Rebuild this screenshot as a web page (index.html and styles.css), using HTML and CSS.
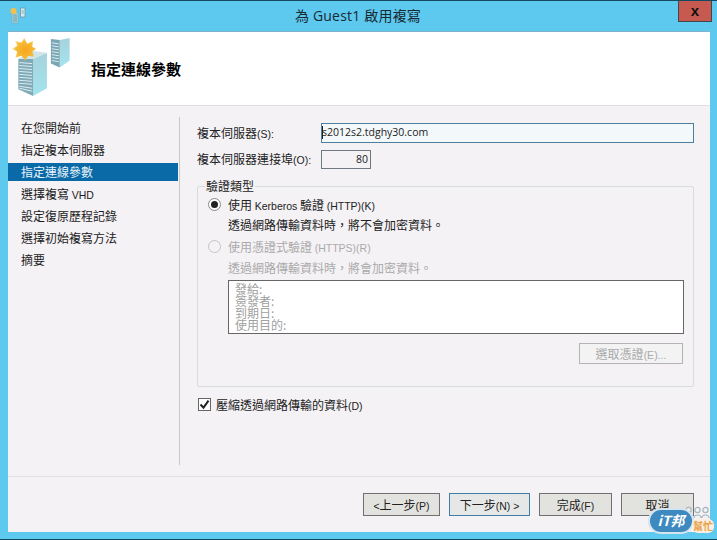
FILE: index.html
```html
<!DOCTYPE html>
<html lang="zh-Hant">
<head>
<meta charset="utf-8">
<title>為 Guest1 啟用複寫</title>
<link rel="stylesheet" href="styles.css">
</head>
<body>
<div class="window">
  <div class="titlebar">
    <svg class="app-icon" width="18" height="22" viewBox="9 5 18 22">
      <polygon points="12,13 18,12 18,23 12,23" fill="#a8d6e0" stroke="#7aa5b0" stroke-width=".6"/>
      <path d="M13 15h4M13 17h4M13 19h4M13 21h4" stroke="#5f8d99" stroke-width=".8"/>
      <rect x="20.500" y="8" width="4.500" height="9" fill="#d4e9ee" stroke="#6f9aa5" stroke-width=".8"/>
      <path d="M21.500 11h2.500M21.500 13h2.500" stroke="#6f9aa5" stroke-width=".7"/>
      <circle cx="13.500" cy="11" r="3" fill="#f3c04a"/>
    </svg>
    <div class="title">為 Guest1 啟用複寫</div>
    <div class="close"><span>x</span></div>
  </div>
  <div class="client">
    <header class="header">
      <svg class="wizard-icon" width="70" height="74" viewBox="8 31 70 74">
        <defs>
          <linearGradient id="sideA" x1="0" y1="0" x2="0" y2="1">
            <stop offset="0" stop-color="#a5d3dc"/><stop offset="1" stop-color="#a4e4ee"/>
          </linearGradient>
          <radialGradient id="sun" cx=".55" cy=".55" r=".55">
            <stop offset="0" stop-color="#f6a51c"/><stop offset=".7" stop-color="#f6bb38"/><stop offset="1" stop-color="#f8d679"/>
          </radialGradient>
        </defs>
        <polygon points="60,39 70,37 70,60 60,67" fill="url(#sideA)"/>
        <polygon points="51,38 60,39 60,67 51,63" fill="#7aa6b3"/>
        <path d="M52 42l7 1M52 45l7 1M52 48l7 1M52 51l7 1M52 54l7 1M52 57l7 1M52 60l7 1" stroke="#d9ecf0" stroke-width="1"/>
        <polygon points="33,58 47,52 47,88 33,96" fill="url(#sideA)"/>
        <polygon points="18,58 33,58 33,96 18,89" fill="#7fa9b6"/>
        <polygon points="18,58 32,50 47,52 33,58" fill="#cfe5ea"/>
        <path d="M19 62l13 1M19 65l13 1M19 68l13 1M19 71l13 1M19 74l13 1M19 77l13 1M19 80l13 1M19 83l13 1M19 86l13 2M19 88l13 3" stroke="#deeff3" stroke-width="1"/>
        <polygon points="24,37 27,43 33,40 32,46 36,48 32,51 34,56 28,55 25,60 21,55 15,57 17,51 12,48 17,45 15,40 21,42" fill="url(#sun)"/>
      </svg>
      <h1 class="heading">指定連線參數</h1>
    </header>
    <div class="main">
      <nav class="steps">
        <div class="step">在您開始前</div>
        <div class="step">指定複本伺服器</div>
        <div class="step step-active">指定連線參數</div>
        <div class="step">選擇複寫 <span class="en">VHD</span></div>
        <div class="step">設定復原歷程記錄</div>
        <div class="step">選擇初始複寫方法</div>
        <div class="step">摘要</div>
      </nav>
      <section class="form">
        <div class="field-server">
          <label class="field-label">複本伺服器<span class="en">(S):</span></label>
          <div class="input input-server"><i class="caret"></i>s2012s2.tdghy30.com</div>
        </div>
        <div class="field-port">
          <label class="field-label">複本伺服器連接埠<span class="en">(O):</span></label>
          <div class="input input-port">80</div>
        </div>
        <fieldset class="auth">
          <legend class="auth-legend">驗證類型</legend>
          <div class="option">
            <span class="radio radio-on"></span>
            <span>使用 <span class="en">Kerberos</span> 驗證 <span class="en">(HTTP)(K)</span></span>
          </div>
          <div class="option-note">透過網路傳輸資料時，將不會加密資料。</div>
          <div class="option option-off">
            <span class="radio radio-off"></span>
            <span>使用憑證式驗證 <span class="en">(HTTPS)(R)</span></span>
          </div>
          <div class="option-note note-off">透過網路傳輸資料時，將會加密資料。</div>
          <div class="cert">
            <div>發給:</div>
            <div>簽發者:</div>
            <div>到期日:</div>
            <div>使用目的:</div>
          </div>
          <div class="cert-actions"><div class="btn-cert">選取憑證<span class="en">(E)...</span></div></div>
        </fieldset>
        <div class="compress">
          <span class="checkbox"><svg width="11" height="11" viewBox="0 0 11 11"><path d="M1.5 5.500l3 3.200 5-7" fill="none" stroke="#222" stroke-width="2"/></svg></span>
          <span>壓縮透過網路傳輸的資料<span class="en">(D)</span></span>
        </div>
      </section>
    </div>
    <footer class="footer">
      <div class="btn btn-back"><span class="en">&lt;</span>上一步<span class="en">(P)</span></div>
      <div class="btn btn-next">下一步<span class="en">(N) &gt;</span></div>
      <div class="btn btn-finish">完成<span class="en">(F)</span></div>
      <div class="btn btn-cancel">取消</div>
    </footer>
  </div>
  <div class="badge">
    <svg class="badge-people" width="26" height="14" viewBox="0 0 26 14">
      <g fill="#eef2f5" stroke="#a9b4bd" stroke-width="1.200">
        <path d="M1 13c0-4 7-4 7 0M10 13c0-4 7-4 7 0M18 13c0-4 7-4 7 0"/>
        <circle cx="4.500" cy="5" r="2.600"/><circle cx="13.500" cy="5" r="2.600"/><circle cx="21.500" cy="5" r="2.600"/>
      </g>
    </svg>
    <div class="badge-pill">iT邦</div>
    <div class="badge-help">幫忙</div>
  </div>
</div>
</body>
</html>
```
FILE: styles.css
```css
* { box-sizing: border-box; }
html, body { margin: 0; padding: 0; }
body {
  width: 717px;
  height: 540px;
  overflow: hidden;
  font-family: "Noto Sans CJK TC", "Open Sans", sans-serif;
  font-size: 12px;
  color: #111;
}
.en { font-family: "Liberation Sans", sans-serif; font-size: 10.5px; }
.window {
  position: relative;
  width: 717px;
  height: 540px;
  background: #5dc9ef;
  border-top: 1px solid #124a62;
  border-bottom: 1px solid #124a62;
  display: flex;
  flex-direction: column;
  padding: 0 7px 7px 8px;
}
.titlebar {
  height: 30px;
  flex: none;
  position: relative;
  display: flex;
  align-items: center;
  justify-content: center;
}
.app-icon { position: absolute; left: 1px; top: 4px; }
.title {
  font-family: "Open Sans", "Noto Sans CJK TC", sans-serif;
  font-size: 14px;
  letter-spacing: .2px;
  line-height: 20px;
  margin: -1px 2px 0 0;
  color: #1a2a33;
}
.close {
  position: absolute;
  right: -2px;
  top: 0;
  width: 34px;
  height: 21px;
  background: #c75a50;
  border: 1px solid #40484c;
  border-top: 0;
  display: flex;
  align-items: center;
  justify-content: center;
}
.close span { font: bold 15px/18px "Liberation Sans", sans-serif; color: #111; }
.client {
  flex: 1;
  min-height: 0;
  display: flex;
  flex-direction: column;
  background: #f5f2f6;
  border-top: 1px solid #7fb4c8;
}
.header {
  height: 74px;
  flex: none;
  background: #fff;
  border-bottom: 1px solid #e2dde0;
  display: flex;
  align-items: flex-start;
}
.wizard-icon { flex: none; height: 73px; }
.heading {
  margin: 27px 0 0 13px;
  font-size: 15px;
  line-height: 20px;
  font-weight: 700;
  color: #000;
}
.main {
  flex: none;
  height: 371px;
  display: flex;
  padding-top: 11px;
  border-bottom: 1px solid #e2dfe3;
}
.steps {
  width: 172px;
  height: 348px;
  flex: none;
  border-right: 1px solid #c9c7cb;
  padding-top: 1px;
}
.step {
  width: 170px;
  height: 22px;
  line-height: 20px;
  padding-left: 13px;
  color: #1b1b1b;
}
.step-active {
  height: 18px;
  line-height: 18px;
  margin: 1px 0 3px;
  background: #0a6aa8;
  color: #e9f4fa;
}
.form {
  width: 515px;
  flex: none;
  padding: 6px 0 0 17px;
}
.field-server, .field-port { display: flex; align-items: center; }
.field-server { height: 20px; }
.field-port { height: 19px; margin-top: 7px; }
.field-label { width: 124px; flex: none; white-space: nowrap; color: #222; line-height: 14px; }
.input {
  border: 1px solid #7c8c96;
  font-family: "Open Sans", sans-serif;
  font-size: 10.5px;
  color: #222;
}
.input-server {
  width: 373px;
  height: 20px;
  line-height: 17px;
  background: #f3f8fa;
  border-color: #4f7f9e;
  padding-left: 0;
  position: relative;
}
.caret { position: absolute; left: 0; top: 2px; width: 1px; height: 13px; background: #222; }
.input-port {
  width: 50px;
  height: 19px;
  line-height: 16px;
  text-align: right;
  padding-right: 2px;
  background: #f5f2f6;
  border-color: #6f7a80;
}
.auth {
  margin: 10px 0 0 0;
  padding: 0 0 0 10px;
  width: 497px;
  height: 208px;
  border: 1px solid #d5dde0;
  border-radius: 2px;
}
.auth-legend { padding: 0 1px; margin-left: -3px; line-height: 14px; color: #222; }
.option { display: flex; align-items: center; gap: 7px; height: 20px; margin-top: 1px; color: #222; }
.option-note { height: 20px; line-height: 20px; margin: 1px 0 0 20px; color: #222; }
.option-off { margin-top: 1px; color: #aaa; }
.note-off { color: #aaa; margin-top: 2px; }
.radio {
  width: 13px;
  height: 13px;
  border-radius: 50%;
  background: #fff;
  flex: none;
  position: relative;
  border: 1px solid #8a8a8a;
}
.radio-on::after {
  content: "";
  position: absolute;
  left: 2px;
  top: 2px;
  width: 7px;
  height: 7px;
  border-radius: 50%;
  background: #222;
}
.radio-off { border-color: #c4c4c4; background: #f5f2f6; }
.cert {
  width: 456px;
  height: 54px;
  margin: 2px 0 0 20px;
  background: #fff;
  border: 1px solid #666;
  padding: 2px 0 0 6px;
  color: #a0a0a0;
  line-height: 12px;
}
.cert-actions { display: flex; justify-content: flex-end; width: 475px; margin-top: 9px; }
.btn-cert {
  width: 104px;
  height: 21px;
  line-height: 19px;
  text-align: center;
  border: 1px solid #b4b4b4;
  background: #f3f3f3;
  color: #aaa;
}
.compress { display: flex; align-items: center; gap: 5px; height: 20px; margin-top: 7px; margin-left: 1px; color: #222; }
.checkbox {
  width: 13px;
  height: 13px;
  flex: none;
  background: #fff;
  border: 1px solid #666;
  display: flex;
  align-items: center;
  justify-content: center;
}
.footer {
  flex: 1;
  display: flex;
  padding-top: 16px;
  padding-left: 355px;
}
.btn {
  height: 23px;
  line-height: 21px;
  text-align: center;
  background: #e2e2df;
  border: 1px solid #707070;
  color: #222;
}
.btn-back { width: 77px; }
.btn-next { width: 81px; margin-left: 9px; border-color: #3f7ea6; background: #e6e8e8; }
.btn-finish { width: 73px; margin-left: 9px; }
.btn-cancel { width: 73px; margin-left: 9px; }
.badge {
  position: absolute;
  left: 648px;
  top: 503px;
  width: 69px;
  height: 33px;
}
.badge-people { position: absolute; left: 36px; top: 1px; }
.badge-pill {
  position: absolute;
  left: 0;
  top: 4px;
  width: 46px;
  height: 26px;
  border-radius: 13px;
  background: #3d8ac0;
  border: 2px solid #d6e4ee;
  color: #fff;
  font: italic 700 14px/21px "Noto Sans CJK TC", sans-serif;
  text-align: center;
}
.badge-help {
  position: absolute;
  left: 44px;
  top: 15px;
  font-size: 10px;
  line-height: 14px;
  font-weight: 700;
  color: #e9a24a;
  background: #fbeee0;
  border-radius: 6px;
  padding: 0 1px;
}
```
